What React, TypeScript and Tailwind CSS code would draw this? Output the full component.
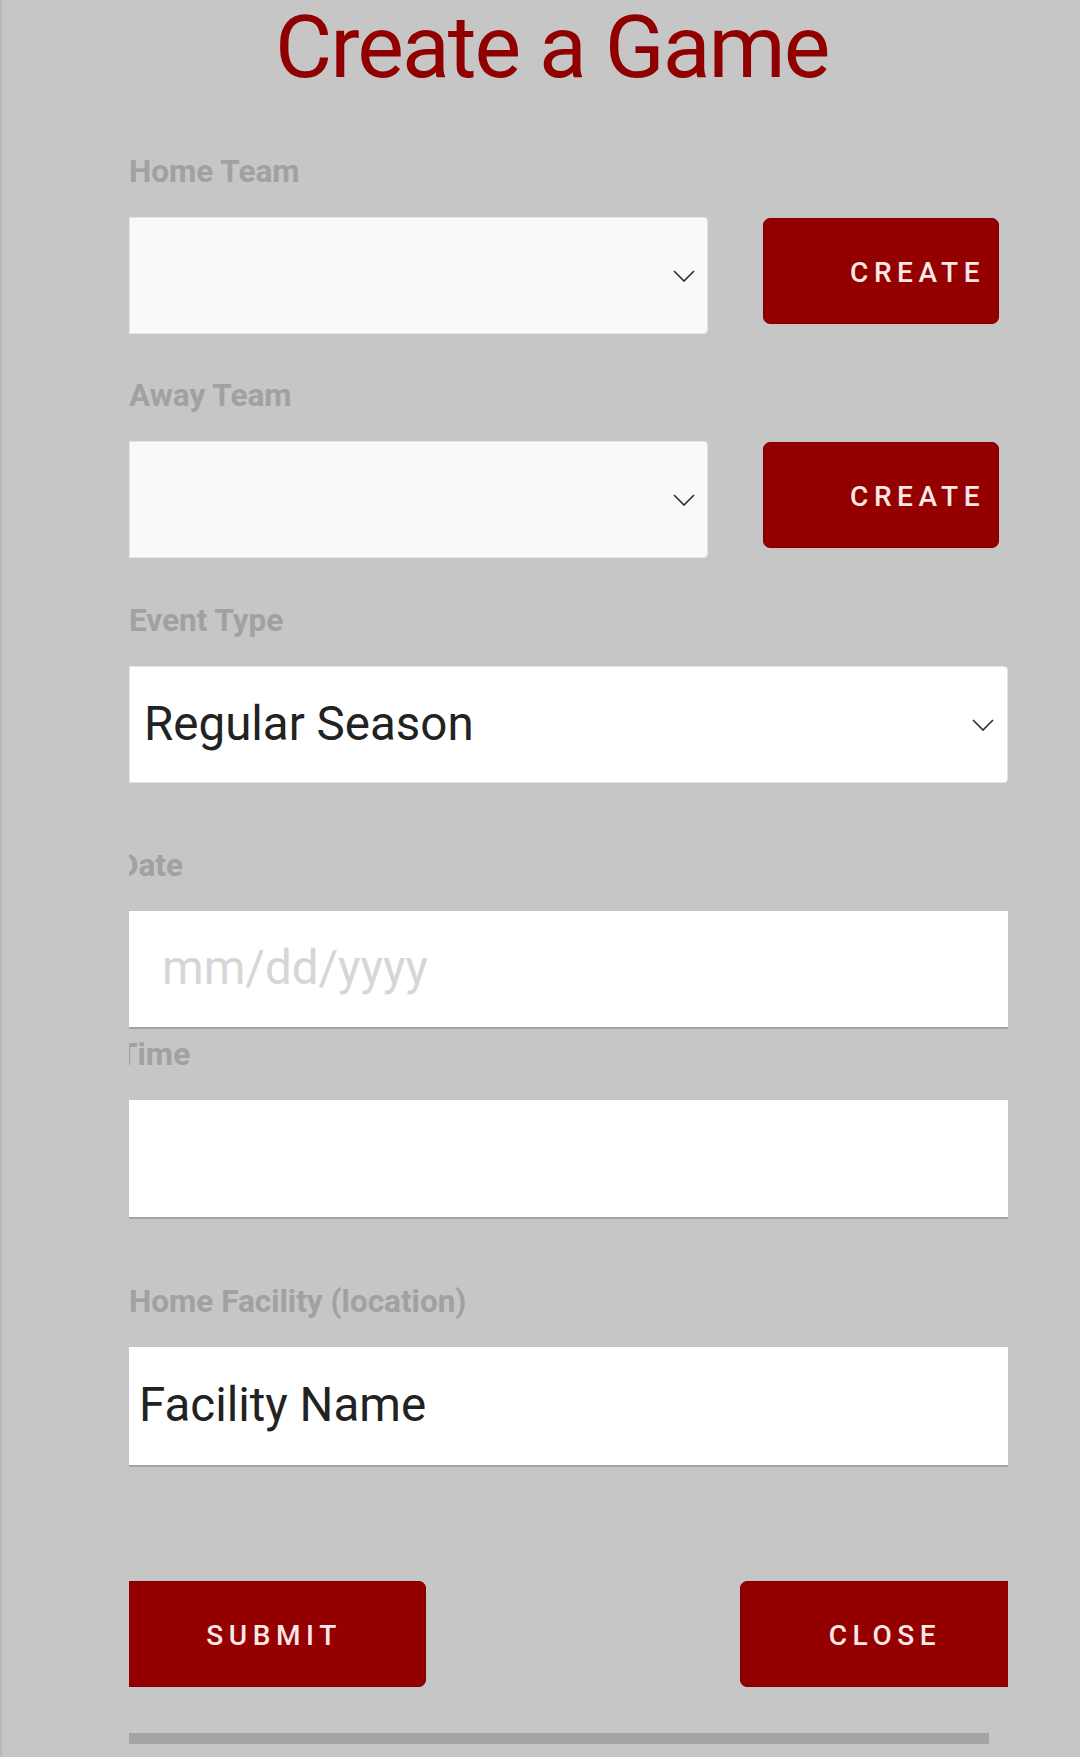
import React from "react";

function Chevron() {
  return (
    <svg width="22" height="12" viewBox="0 0 22 12" fill="none" className="shrink-0">
      <path d="M1 1l10 10L21 1" stroke="#333" strokeWidth="1.7" />
    </svg>
  );
}

function Label({ children, className = "" }: { children: React.ReactNode; className?: string }) {
  return (
    <div className={`text-[31.5px] leading-[30px] font-bold text-[#a1a1a1] whitespace-nowrap ${className}`}>
      {children}
    </div>
  );
}

function TeamRow({ label, first }: { label: string; first?: boolean }) {
  return (
    <>
      <Label className={first ? "mt-[66px]" : "mt-[47px]"}>{label}</Label>
      <div className="mt-[30px] flex items-start">
        <div className="w-[579px] h-[117px] bg-[#f9f9f9] border border-[#e4e4e4] rounded-r-[4px] flex items-center justify-end pr-[12px]">
          <Chevron />
        </div>
        <button className="ml-[55px] mt-[1px] w-[236px] h-[106px] shrink-0 bg-[#940000] border border-[#7c0000] rounded-[7px] pl-[86px] pt-[3px] text-left text-[28px] font-medium tracking-[0.2em] text-[#fbe7e7]">
          CREATE
        </button>
      </div>
    </>
  );
}

export default function App() {
  return (
    <div className="h-[1757px] overflow-hidden bg-[#c6c6c6] border-l-2 border-[#b8b8b8] font-['Roboto',sans-serif]">
      <h1 className="pt-[3px] pl-[273px] text-[88px] leading-[88px] font-normal tracking-[-2px] text-[#900000] whitespace-nowrap">
        Create a Game
      </h1>

      <div className="ml-[127px] w-[879px] overflow-hidden">
        <TeamRow label="Home Team" first />
        <TeamRow label="Away Team" />

        <Label className="mt-[48px]">Event Type</Label>
        <div className="mt-[30px] h-[117px] bg-white border border-[#e4e4e4] rounded-r-[4px] flex items-center justify-between pl-[14px] pr-[13px]">
          <span className="text-[47.5px] text-[#222]">Regular Season</span>
          <Chevron />
        </div>

        <Label className="mt-[68px] -ml-[11px]">Date</Label>
        <div className="mt-[30px] h-[118px] bg-white border-b-2 border-[#a3a3a3] flex items-center pl-[33px]">
          <span className="text-[47.5px] text-[#d6d6d6]">mm/dd/yyyy</span>
        </div>

        <Label className="mt-[11px] -ml-[11px]">Time</Label>
        <div className="mt-[30px] h-[119px] bg-white border-b-2 border-[#a3a3a3]" />

        <Label className="mt-[68px]">Home Facility (location)</Label>
        <div className="mt-[30px] h-[120px] bg-white border-b-2 border-[#a3a3a3] flex items-center pl-[10px]">
          <span className="text-[47.5px] text-[#222]">Facility Name</span>
        </div>

        <div className="mt-[114px] -ml-[13px] w-[908px] flex justify-between">
          <button className="w-[310px] h-[106px] bg-[#940000] border border-[#7c0000] rounded-[7px] pl-[6px] pt-[4px] text-[28px] font-medium tracking-[0.2em] text-[#fbe7e7]">
            SUBMIT
          </button>
          <button className="w-[284px] h-[106px] bg-[#940000] border border-[#7c0000] rounded-[7px] pl-[6px] pt-[4px] text-[28px] font-medium tracking-[0.2em] text-[#fbe7e7]">
            CLOSE
          </button>
        </div>

        <div className="mt-[46px] w-[860px] h-[11px] bg-[#a4a4a4]" />
      </div>
    </div>
  );
}
